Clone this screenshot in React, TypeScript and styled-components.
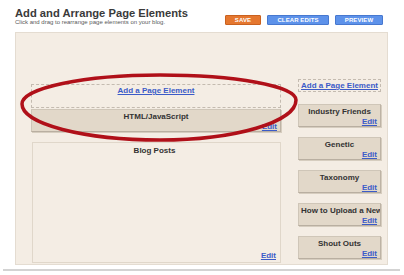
import React from 'react';
import styled, { createGlobalStyle } from 'styled-components';

const GlobalStyle = createGlobalStyle`
  body {
    margin: 0;
    background: #ffffff;
    font-family: "Liberation Sans", Arial, sans-serif;
  }
`;

const Page = styled.div`
  position: relative;
  width: 404px;
  height: 275px;
  overflow: hidden;
`;

const Header = styled.div`
  display: flex;
  justify-content: space-between;
  align-items: flex-start;
  padding: 7px 21px 0 15px;
  height: 25px;
`;

const TitleBlock = styled.div`
  display: flex;
  flex-direction: column;
`;

const Title = styled.h1`
  margin: 0;
  font-size: 11.2px;
  line-height: 12px;
  font-weight: bold;
  color: #3a3a3a;
`;

const SubTitle = styled.p`
  margin: 0;
  font-size: 6px;
  line-height: 7px;
  color: #5a5a5a;
`;

const Buttons = styled.div`
  display: flex;
  gap: 6px;
  margin-top: 8px;
`;

const Button = styled.div<{ $tone: 'orange' | 'blue'; $w: number }>`
  display: flex;
  align-items: center;
  justify-content: center;
  width: ${p => p.$w}px;
  height: 10px;
  box-sizing: border-box;
  border-radius: 1px;
  background: ${p => (p.$tone === 'orange' ? '#e5772f' : '#5d92ea')};
  border: 1px solid ${p => (p.$tone === 'orange' ? '#c9611f' : '#4778cf')};
  color: #ffffff;
  font-size: 6px;
  font-weight: bold;
  letter-spacing: 0.1px;
`;

const Panel = styled.div`
  display: flex;
  margin-left: 15px;
  width: 373px;
  height: 233px;
  box-sizing: border-box;
  background: #f4ede4;
  border: 1px solid #e4dcd1;
  padding-left: 15px;
`;

const MainColumn = styled.div`
  display: flex;
  flex-direction: column;
  width: 250px;
  padding-top: 51px;
`;

const SideColumn = styled.div`
  display: flex;
  flex-direction: column;
  width: 83px;
  margin-left: 17px;
  padding-top: 46px;
  gap: 10px;
`;

const AddBox = styled.div<{ $h: number }>`
  box-sizing: border-box;
  height: ${p => p.$h}px;
  border: 1px dashed #c4bbb0;
  display: flex;
  justify-content: center;
  padding-top: 1px;
`;

const Link = styled.span`
  color: #3b5bc8;
  font-size: 8px;
  line-height: 10px;
  font-weight: bold;
  text-decoration: underline;
  white-space: nowrap;
`;

const Widget = styled.div<{ $gap?: number }>`
  box-sizing: border-box;
  height: 23px;
  margin-top: ${p => p.$gap ?? 0}px;
  background: #e2d8c9;
  border: 1px solid #cfc6b8;
  border-right-color: #bdb3a5;
  border-bottom-color: #b9afa1;
  box-shadow: 1px 1px 0 #d6cdbf;
  display: flex;
  flex-direction: column;
  padding: 2px 2px 0 2px;
  overflow: hidden;
`;

const WidgetTitle = styled.div`
  font-size: 8px;
  line-height: 10px;
  font-weight: bold;
  color: #333333;
  text-align: center;
  white-space: nowrap;
`;

const EditRow = styled.div`
  display: flex;
  justify-content: flex-end;
  line-height: 9px;
  padding-right: 1px;
`;

const BlogBox = styled.div`
  box-sizing: border-box;
  margin-top: 10px;
  margin-left: 1px;
  height: 121px;
  border: 1px solid #e0d7ca;
  display: flex;
  flex-direction: column;
  padding: 3px 4px 0 0;
`;

const BlogBody = styled.div`
  flex: 1;
  display: flex;
  align-items: flex-end;
  justify-content: flex-end;
  padding-bottom: 1px;
`;

const Rule = styled.div`
  margin: 4px 4px 0 3px;
  height: 2px;
  background: #d3d3d3;
`;

const Circle = styled.svg`
  position: absolute;
  left: 0;
  top: 0;
  pointer-events: none;
`;

const sidebar = ['Industry Friends', 'Genetic', 'Taxonomy', 'How to Upload a New', 'Shout Outs'];

const Edit = () => (
  <EditRow>
    <Link>Edit</Link>
  </EditRow>
);

const App: React.FC = () => (
  <Page>
    <GlobalStyle />
    <Header>
      <TitleBlock>
        <Title>Add and Arrange Page Elements</Title>
        <SubTitle>Click and drag to rearrange page elements on your blog.</SubTitle>
      </TitleBlock>
      <Buttons>
        <Button $tone="orange" $w={36}>SAVE</Button>
        <Button $tone="blue" $w={62}>CLEAR EDITS</Button>
        <Button $tone="blue" $w={48}>PREVIEW</Button>
      </Buttons>
    </Header>
    <Panel>
      <MainColumn>
        <AddBox $h={24}>
          <Link>Add a Page Element</Link>
        </AddBox>
        <Widget $gap={1}>
          <WidgetTitle>HTML/JavaScript</WidgetTitle>
          <Edit />
        </Widget>
        <BlogBox>
          <WidgetTitle>Blog Posts</WidgetTitle>
          <BlogBody>
            <Link>Edit</Link>
          </BlogBody>
        </BlogBox>
      </MainColumn>
      <SideColumn>
        <AddBox $h={13}>
          <Link>Add a Page Element</Link>
        </AddBox>
        {sidebar.map((name, i) => (
          <Widget key={name} $gap={i === 0 ? 2 : 0}>
            <WidgetTitle>{name}</WidgetTitle>
            <Edit />
          </Widget>
        ))}
      </SideColumn>
    </Panel>
    <Rule />
    <Circle width="404" height="275" viewBox="0 0 404 275">
      <path
        d="M22,104 C22,88 84,75 160,75 C235,75 296,86 296,100 C296,122 235,140 160,140 C84,140 22,124 22,104 Z"
        fill="none"
        stroke="#b01019"
        strokeWidth="3.5"
      />
    </Circle>
  </Page>
);

export default App;
